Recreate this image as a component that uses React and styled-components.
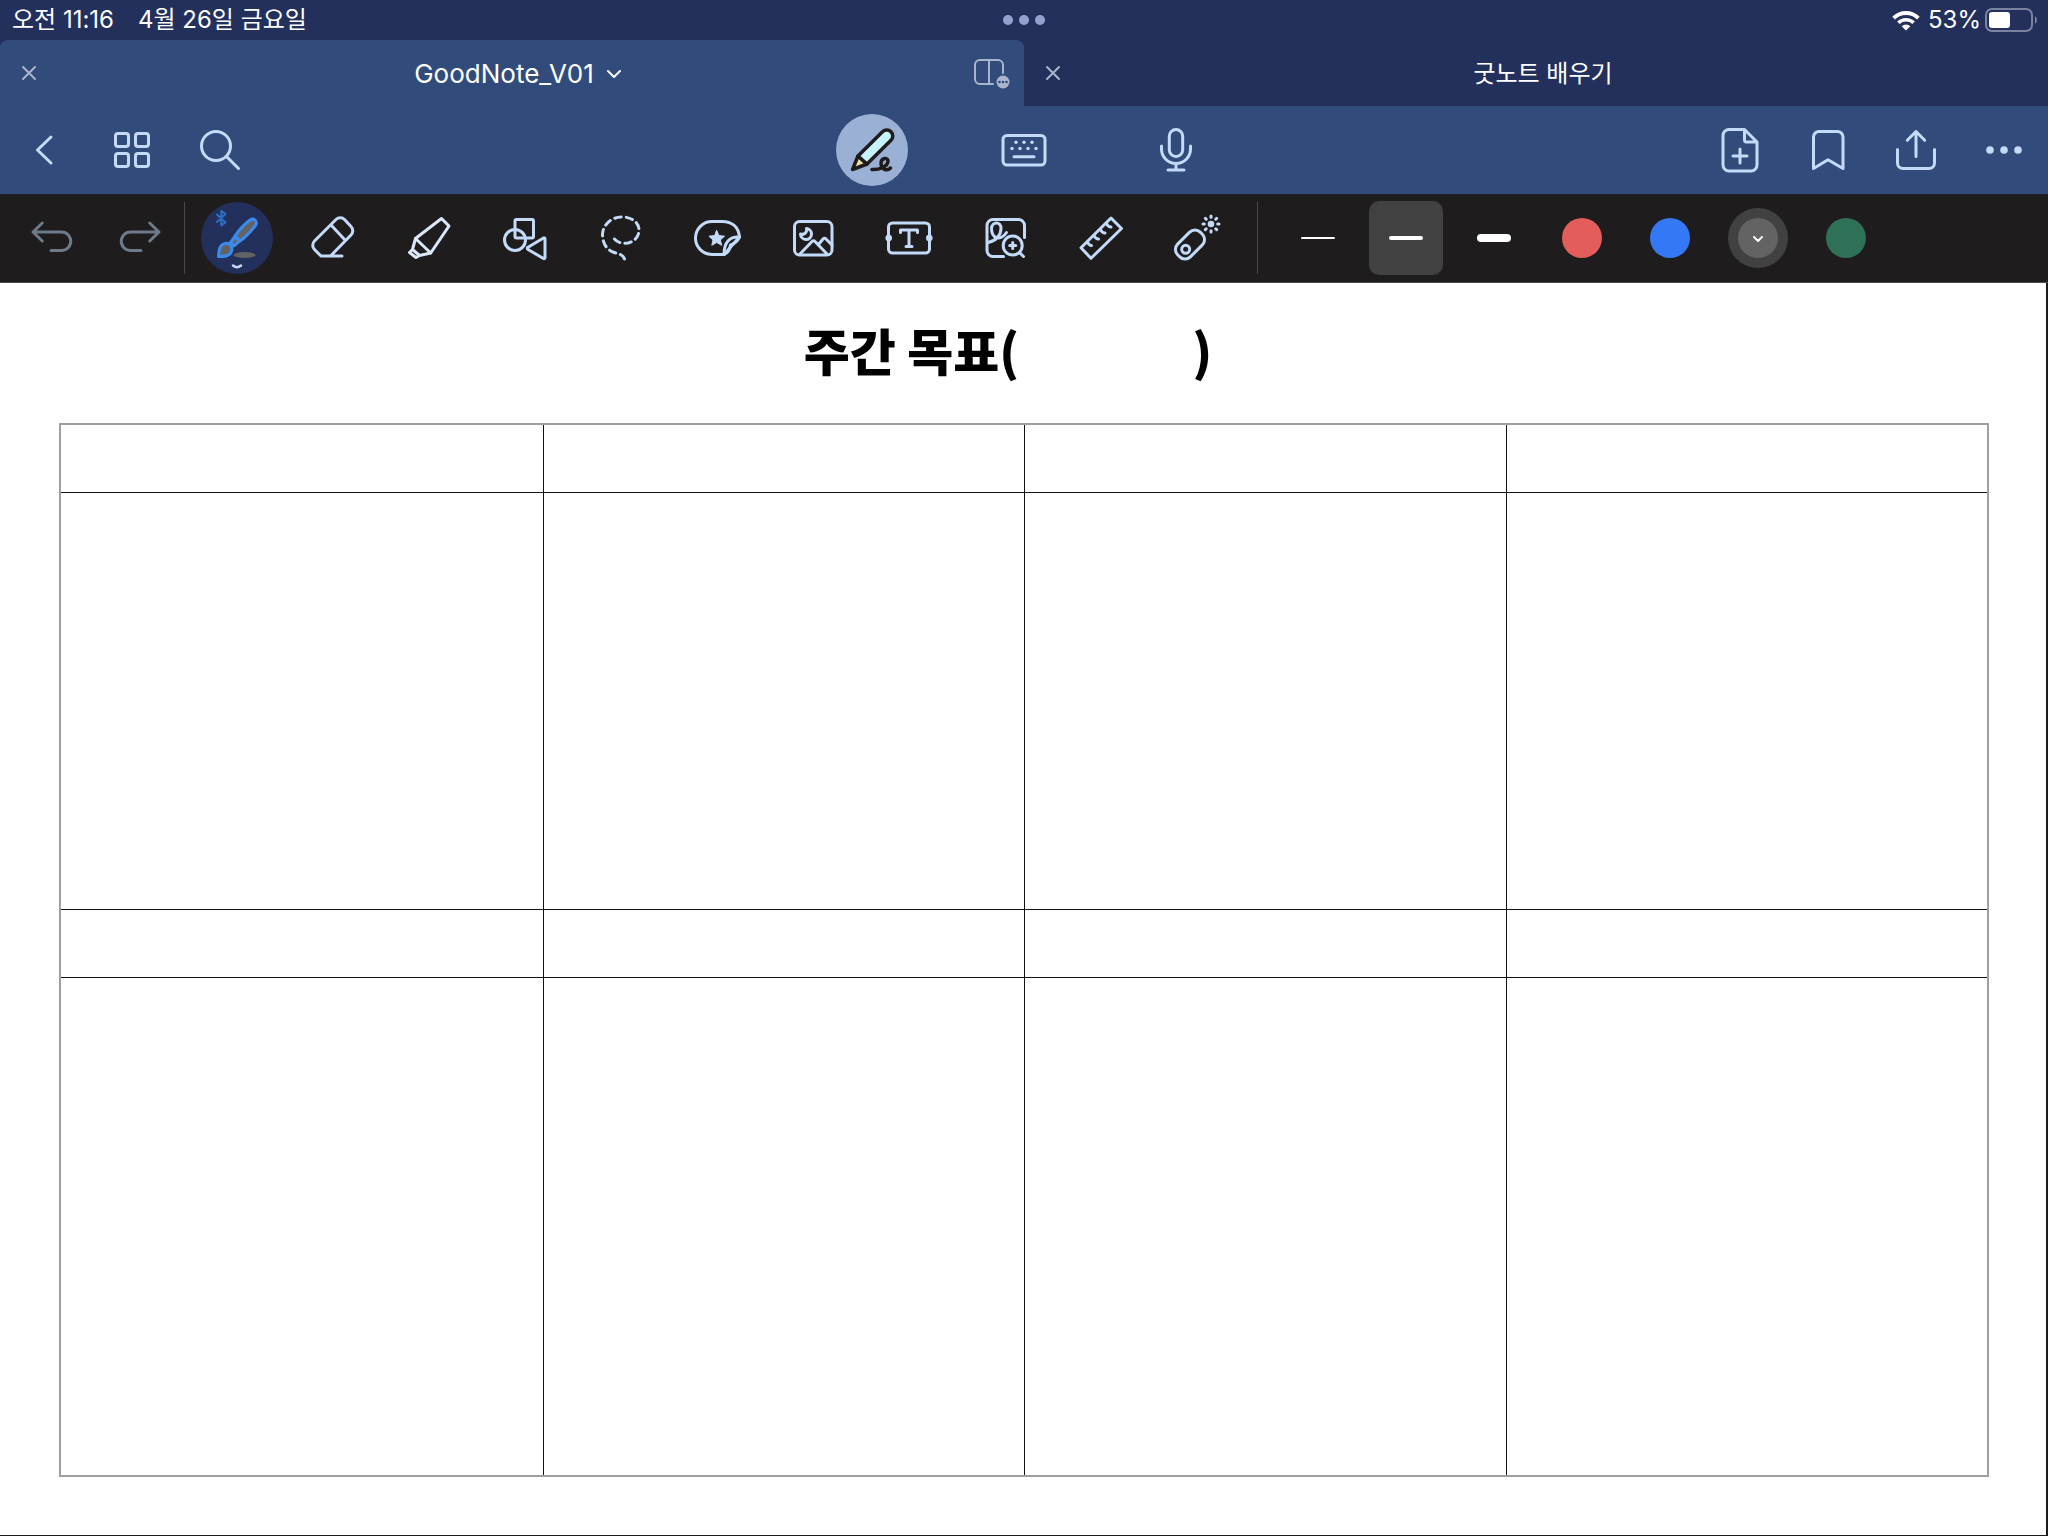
import React, { useState } from 'react';
import styled, { createGlobalStyle } from 'styled-components';

const GlobalStyle = createGlobalStyle`
  * {
    box-sizing: border-box;
  }

  body {
    margin: 0;
    background: #1e1c1d;
    font-family: Inter, 'Noto Sans CJK KR', sans-serif;
  }

  button {
    padding: 0;
    border: 0;
    background: none;
    color: inherit;
    font: inherit;
    cursor: pointer;
  }
`;

const Screen = styled.div`
  display: flex;
  flex-direction: column;
  min-height: 100vh;
`;

const StatusBar = styled.header`
  display: grid;
  grid-template-columns: 1fr auto 1fr;
  align-items: center;
  height: 40px;
  padding: 0 10px;
  background: #24305c;
  color: #fff;
  font-size: 24px;
  line-height: 40px;
`;

const StatusTime = styled.div`
  display: flex;
  gap: 24px;
  padding-left: 2px;
`;

const StatusRight = styled.div`
  display: flex;
  align-items: center;
  justify-content: flex-end;
  gap: 4px;
`;

const BatteryLevel = styled.span`
  padding-left: 4px;
`;

const MultitaskButton = styled.button`
  display: flex;
  gap: 6px;
`;

const MultitaskDot = styled.span`
  width: 10px;
  height: 10px;
  border-radius: 50%;
  background: #96a1d0;
`;

const Tabs = styled.nav`
  display: grid;
  grid-template-columns: 1fr 1fr;
  height: 66px;
  background: #24305c;
`;

const Tab = styled.div`
  display: flex;
  align-items: center;
  padding-right: ${({ $active }) => ($active ? '6px' : '44px')};
  border-radius: 8px 8px 0 0;
  background: ${({ $active }) => ($active ? '#314c7b' : 'transparent')};
  color: #fff;
`;

const TabButton = styled.button`
  display: flex;
  flex: none;
  align-items: center;
  justify-content: center;
  width: ${({ $width }) => $width}px;
  height: 100%;
  color: #aab4cc;
`;

const TabTitle = styled.button`
  display: flex;
  flex: 1;
  align-items: center;
  justify-content: center;
  gap: 12px;
  height: 100%;
  font-size: ${({ $size }) => $size}px;
  line-height: 32px;

  && {
    padding: 2px 0 0 ${({ $indent }) => $indent || 0}px;
  }
`;

const NavBar = styled.div`
  display: grid;
  grid-template-columns: 1fr auto 1fr;
  align-items: center;
  height: 88px;
  background: #314c7b;
  color: #c3daf8;
`;

const NavGroup = styled.div`
  display: flex;
  justify-content: ${({ $align }) => $align || 'flex-start'};
  gap: ${({ $gap }) => $gap || 0}px;
`;

const IconButton = styled.button`
  display: flex;
  align-items: center;
  justify-content: center;
  width: ${({ $width }) => $width || 88}px;
  height: 72px;
  color: ${({ $muted }) => ($muted ? '#6f7a88' : 'inherit')};
`;

const RoundButton = styled(IconButton)`
  width: 72px;
  border-radius: 50%;
  background: ${({ $fill }) => $fill || 'transparent'};
`;

const ToolBar = styled.div`
  display: flex;
  align-items: center;
  height: 89px;
  padding: 0 8px;
  border-bottom: 1px solid #4a4849;
  background: #1e1c1d;
  color: #c3daf8;
`;

const Divider = styled.span`
  width: 1px;
  height: 72px;
  background: #4a4849;
`;

const Tools = styled.div`
  display: flex;
  gap: 24px;
  padding: 0 24px 0 16px;
`;

const Presets = styled.div`
  display: flex;
  gap: 14px;
  padding-left: 23px;
`;

const PresetButton = styled.button`
  display: flex;
  align-items: center;
  justify-content: center;
  width: 74px;
  height: 74px;
  border-radius: 10px;
  background: ${({ $selected }) => ($selected ? '#414142' : 'transparent')};
`;

const StrokeLine = styled.span`
  width: 34px;
  height: ${({ $size }) => $size}px;
  border-radius: 4px;
  background: #fff;
`;

const ColorRing = styled.span`
  display: flex;
  align-items: center;
  justify-content: center;
  width: 60px;
  height: 60px;
  border-radius: 50%;
  background: ${({ $selected }) => ($selected ? '#414142' : 'transparent')};
`;

const ColorDot = styled.span`
  display: flex;
  align-items: center;
  justify-content: center;
  width: 40px;
  height: 40px;
  border-radius: 50%;
  background: ${({ $color }) => $color};
  color: #fff;
`;

const Paper = styled.main`
  display: flex;
  flex: 1;
  flex-direction: column;
  padding: 30px 57px 58px 59px;
  border-right: 2px solid #1e1c1d;
  border-bottom: 1px solid #1e1c1d;
  background: #fff;
`;

const Title = styled.h1`
  display: flex;
  justify-content: center;
  gap: 173px;
  margin: 0 0 38px;
  padding-right: 32px;
  color: #000;
  font-family: 'Noto Sans CJK KR', sans-serif;
  font-size: 50px;
  font-weight: 900;
  line-height: 72px;
`;

const Planner = styled.table`
  flex: 1;
  width: 100%;
  border: 2px solid #9f9f9f;
  border-spacing: 0;
  table-layout: fixed;
`;

const PlannerRow = styled.tr`
  height: ${({ $height }) => $height}px;

  &:last-child > td {
    border-bottom: 0;
  }
`;

const PlannerCell = styled.td`
  padding: 0;
  border-left: 1px solid #111;
  border-bottom: 1px solid #111;

  &:first-child {
    border-left: 0;
  }
`;

const Icon = ({ size = 48, width = size, height = size, stroke = 3, children }) => (
  <svg
    width={width}
    height={height}
    viewBox={`0 0 ${width} ${height}`}
    fill="none"
    stroke="currentColor"
    strokeWidth={stroke}
    strokeLinecap="round"
    strokeLinejoin="round"
    aria-hidden="true"
  >
    {children}
  </svg>
);

const CloseIcon = () => (
  <Icon size={16} stroke={2}>
    <path d="M2 2L14 14M14 2L2 14" />
  </Icon>
);

const ChevronIcon = () => (
  <Icon width={16} height={12} stroke={2}>
    <path d="M2 3L8 9L14 3" />
  </Icon>
);

const SplitIcon = () => (
  <Icon width={36} height={32} stroke={2}>
    <path d="M19 27H6a5 5 0 0 1-5-5V8a5 5 0 0 1 5-5h18a5 5 0 0 1 5 5v8M15 3v24" />
    <circle cx="29" cy="25" r="6.5" fill="currentColor" stroke="none" />
    <g fill="#314c7b" stroke="none">
      <circle cx="25.5" cy="25" r="1.3" />
      <circle cx="29" cy="25" r="1.3" />
      <circle cx="32.5" cy="25" r="1.3" />
    </g>
  </Icon>
);

const WifiIcon = () => (
  <Icon width={28} height={22} stroke={0}>
    <g fill="#fff">
      <path d="M14 21.5l-4.3-4.3a6.4 6.4 0 0 1 8.6 0z" />
      <path d="M7.7 15.1L5.1 12.5a12.8 12.8 0 0 1 17.8 0l-2.6 2.6a9.2 9.2 0 0 0-12.6 0z" />
      <path d="M3 10.4L.3 7.7a19.6 19.6 0 0 1 27.4 0L25 10.4a15.8 15.8 0 0 0-22 0z" />
    </g>
  </Icon>
);

const BatteryIcon = () => (
  <Icon width={53} height={24} stroke={2}>
    <rect x="1" y="1" width="46" height="22" rx="6" stroke="#7c83a0" />
    <rect x="4" y="4" width="21" height="16" rx="3" fill="#fff" stroke="none" />
    <path d="M50 8v8a5 5 0 0 0 0-8z" fill="#7c83a0" stroke="none" />
  </Icon>
);

const BackIcon = () => (
  <Icon>
    <path d="M31 11L17.5 24L31 37" />
  </Icon>
);

const GridIcon = () => (
  <Icon>
    <rect x="7.5" y="7.5" width="13" height="13" rx="2.5" />
    <rect x="27.5" y="7.5" width="13" height="13" rx="2.5" />
    <rect x="7.5" y="27.5" width="13" height="13" rx="2.5" />
    <rect x="27.5" y="27.5" width="13" height="13" rx="2.5" />
  </Icon>
);

const SearchIcon = () => (
  <Icon>
    <circle cx="20" cy="20" r="14.5" />
    <path d="M30.5 30.5L42.5 42.5" />
  </Icon>
);

const PencilIcon = () => (
  <Icon size={72} stroke={3.5}>
    <g stroke="#1e1c1d">
      <path d="M22 42L16.5 55.5L31 50z" fill="#ecdf9c" />
      <path d="M22 42L46.5 17.7a6 6 0 0 1 8.5 8.5L31 50z" fill="#c9f3fc" />
      <path d="M36 55.5c7 .5 16-3 16-8.500 0-4-7-3.500-7 2.500 0 6 6 8 9.500 4.500" />
    </g>
  </Icon>
);

const KeyboardIcon = () => (
  <Icon>
    <rect x="3" y="9.5" width="42" height="29.5" rx="4" />
    <path d="M14 30.7H34" />
    <g fill="currentColor" stroke="none">
      {[16, 24, 32].map((x) => (
        <circle key={x} cx={x} cy="16.3" r="1.7" />
      ))}
      {[12, 20, 28, 36].map((x) => (
        <circle key={x} cx={x} cy="22.5" r="1.7" />
      ))}
    </g>
  </Icon>
);

const MicIcon = () => (
  <Icon>
    <rect x="17.3" y="3.5" width="13.4" height="27" rx="6.7" />
    <path d="M9.5 20v3a14.5 14.5 0 0 0 29 0v-3M24 37.5V44M16 44H32" />
  </Icon>
);

const AddPageIcon = () => (
  <Icon>
    <path d="M28.5 3.5H13a6 6 0 0 0-6 6V39a6 6 0 0 0 6 6H35a6 6 0 0 0 6-6V16L28.5 3.5V14a2 2 0 0 0 2 2H41M24 23v14M17 30H31" />
  </Icon>
);

const BookmarkIcon = () => (
  <Icon>
    <path d="M9.5 42.5V11a5.5 5.5 0 0 1 5.5-5.5H33.5A5.5 5.5 0 0 1 39 11V42.5L24 33.8z" />
  </Icon>
);

const ShareIcon = () => (
  <Icon>
    <path d="M24 30.5V5.5M15.3 14.3L24 5.5L32.7 14.3M5.5 23.5V37a5.5 5.5 0 0 0 5.5 5.5H37a5.5 5.5 0 0 0 5.5-5.5V23.5" />
  </Icon>
);

const MoreIcon = () => (
  <Icon>
    <g fill="currentColor" stroke="none">
      <circle cx="10" cy="24" r="3.8" />
      <circle cx="24" cy="24" r="3.8" />
      <circle cx="38" cy="24" r="3.8" />
    </g>
  </Icon>
);

const UndoIcon = () => (
  <Icon>
    <path d="M14.3 9L5 18L14.3 27M5 18H33.5a9.25 9.25 0 0 1 0 18.5H23" />
  </Icon>
);

const RedoIcon = () => (
  <Icon>
    <path d="M33.7 9L43 18L33.7 27M43 18H14.5a9.25 9.25 0 0 0 0 18.5H25" />
  </Icon>
);

const BrushIcon = () => (
  <Icon size={72}>
    <path d="M16 12.5L24.5 20.5L20.3 23.5V9L24.5 12L16 20" stroke="#2c6fc9" strokeWidth="2" />
    <ellipse cx="43.5" cy="53" rx="11" ry="3" fill="#636363" stroke="none" />
    <g fill="#636363" stroke="#3a8bee">
      <path d="M34 34C38 28 45 21 49 18c4-2.5 8 1.5 5.5 5.5C51 28 45 35 39 39z" />
      <path d="M29.5 40.5L34 34.5L38.5 39L33 44z" />
      <path d="M17.5 54.5c.5-3 0-5.5 1.5-9 2.5-5 8.5-5.5 11-1.5 2.5 4.5-.5 9-5 10-2.5.5-5 .5-7.5.5z" />
    </g>
    <path d="M32 63.5q4 3.5 8 0" stroke="#c3daf8" strokeWidth="2.5" />
  </Icon>
);

const EraserIcon = () => (
  <Icon>
    <path d="M12 42L5.500 35.5a6 6 0 0 1 0-8.5L27 5.500a6 6 0 0 1 8.5 0L42 12.5a6 6 0 0 1 0 8.500L21.500 42M12 42H33M22.500 11.500L36 26" />
  </Icon>
);

const HighlighterIcon = () => (
  <Icon>
    <g stroke="#dbe8fa">
      <path d="M36.5 4.5L44 12L25.7 39L10.5 24.5z" />
      <path d="M10.5 24.5L7.5 35.5M25.7 39L14.5 41.5M7.5 35.5L14.5 41.5L11 43.5L4.5 38.5z" />
    </g>
  </Icon>
);

const ShapesIcon = () => (
  <Icon>
    <rect x="14" y="5.5" width="18.5" height="18.5" rx="1.5" />
    <circle cx="14" cy="26" r="10.5" />
    <path d="M27 33.2L42.5 24a1 1 0 0 1 1.5 1V43.5a1 1 0 0 1-1.5 1L27 35.5a1.3 1.3 0 0 1 0-2.3z" />
  </Icon>
);

const LassoIcon = () => (
  <Icon>
    <path
      d="M17.5 25C21 29 26 29.8 31 29C38 27.5 42 22 42 16C42 8 34 3 25 3C14 3 6 11 5.5 20C5.5 29 9 35 16 38C21 40 26 40 27.5 45"
      strokeDasharray="6.5 5"
    />
  </Icon>
);

const StickerIcon = () => (
  <Icon>
    <path d="M46.5 23C45.5 13 39 7.5 29 7.5H19A16.5 16.5 0 0 0 19 40.5H31z" />
    <path d="M46.5 23C37 22 31 28 31 40.5C36 38.5 37 35 37.5 31C41 30 44 28 46.5 23z" />
    <path
      d="M23.7 16.5L26 21.6L31.5 22.2L27.4 25.9L28.6 31.3L23.7 28.5L18.8 31.3L20 25.9L15.9 22.2L21.4 21.6z"
      fill="currentColor"
      strokeWidth="1"
    />
  </Icon>
);

const ImageIcon = () => (
  <Icon>
    <rect x="5.5" y="7.5" width="37.5" height="33.5" rx="5" />
    <path d="M11 40L23 27.5a2 2 0 0 1 3 0L38 40M29.5 30.5L34 25a2 2 0 0 1 3 0L43 31" />
    <path d="M17.5 14.5a4.5 4.5 0 0 1-6 5.5a5.5 5.5 0 1 0 6-5.5z" />
  </Icon>
);

const TextIcon = () => (
  <Icon>
    <rect x="3.5" y="9" width="41" height="30" rx="4" />
    <circle cx="3.7" cy="24" r="3.3" fill="currentColor" stroke="none" />
    <circle cx="44.3" cy="24" r="3.3" fill="currentColor" stroke="none" />
    <path d="M15.5 18.5V16H32.5V18.5M24 16V32.5M21 32.5H27" />
  </Icon>
);

const ZoomIcon = () => (
  <Icon>
    <path d="M22.5 42.5H12a6 6 0 0 1-6-6V11.5a6 6 0 0 1 6-6H37.5a6 6 0 0 1 6 6V23.5" />
    <path d="M7 28.5C15 27 20 21 20 14.5C20 7 11 7 10.5 14.5C10.5 24 19 28 25.5 18.5" />
    <circle cx="31.7" cy="31.5" r="9.5" />
    <path d="M38.5 38.5L42.5 42.5M31.7 28.5V34.5M28.7 31.5H34.7" />
  </Icon>
);

const RulerIcon = () => (
  <Icon>
    <path d="M34 4L44.5 14.5L14 44.3L4 33.8z" />
    <path d="M10.5 28q1.5 3.500 4 3.500M17 21.500q1.500 3.500 4.500 3.500M23.500 15.500q1.500 3.500 4.500 3.500M29.500 9.500q1.500 3.500 4.500 3.500" />
  </Icon>
);

const LaserIcon = () => (
  <Icon>
    <rect x="1" y="21.5" width="32" height="18" rx="7.5" transform="rotate(-45 17 30.5)" />
    <circle cx="12.7" cy="35.3" r="4" />
    <circle cx="38" cy="10" r="3.3" fill="currentColor" stroke="none" />
    {[0, 45, 90, 135, 180, 225, 270, 315].map((angle) => (
      <path key={angle} d="M38 3.3V2" transform={`rotate(${angle} 38 10)`} />
    ))}
  </Icon>
);

const TOOLS = [
  { label: 'Eraser', icon: EraserIcon },
  { label: 'Highlighter', icon: HighlighterIcon },
  { label: 'Shapes', icon: ShapesIcon },
  { label: 'Lasso', icon: LassoIcon },
  { label: 'Stickers', icon: StickerIcon },
  { label: 'Image', icon: ImageIcon },
  { label: 'Text', icon: TextIcon },
  { label: 'Zoom window', icon: ZoomIcon },
  { label: 'Ruler', icon: RulerIcon },
  { label: 'Laser pointer', icon: LaserIcon },
];

const STROKES = [2, 4, 8];
const COLORS = ['#e35d5b', '#3478f6', '#636363', '#2f7156'];
const ROWS = [68, 417, 68, 497];
const COLUMNS = [0, 1, 2, 3];

const App = () => {
  const [strokeSize, setStrokeSize] = useState(4);
  const [color, setColor] = useState('#636363');

  return (
    <Screen>
      <GlobalStyle />
      <StatusBar>
        <StatusTime>
          <span>오전 11:16</span>
          <span>4월 26일 금요일</span>
        </StatusTime>
        <MultitaskButton aria-label="Multitasking">
          <MultitaskDot />
          <MultitaskDot />
          <MultitaskDot />
        </MultitaskButton>
        <StatusRight>
          <WifiIcon />
          <BatteryLevel>53%</BatteryLevel>
          <BatteryIcon />
        </StatusRight>
      </StatusBar>

      <Tabs>
        <Tab $active>
          <TabButton $width={58} aria-label="Close tab">
            <CloseIcon />
          </TabButton>
          <TabTitle $size={26} $indent={12}>
            GoodNote_V01
            <ChevronIcon />
          </TabTitle>
          <TabButton $width={52} aria-label="Split view">
            <SplitIcon />
          </TabButton>
        </Tab>
        <Tab>
          <TabButton $width={58} aria-label="Close tab">
            <CloseIcon />
          </TabButton>
          <TabTitle $size={24}>굿노트 배우기</TabTitle>
        </Tab>
      </Tabs>

      <NavBar>
        <NavGroup>
          <IconButton aria-label="Back"><BackIcon /></IconButton>
          <IconButton aria-label="Pages"><GridIcon /></IconButton>
          <IconButton aria-label="Search"><SearchIcon /></IconButton>
        </NavGroup>
        <NavGroup $gap={80}>
          <RoundButton $fill="#9ab0d4" aria-label="Write"><PencilIcon /></RoundButton>
          <RoundButton aria-label="Keyboard"><KeyboardIcon /></RoundButton>
          <RoundButton aria-label="Record"><MicIcon /></RoundButton>
        </NavGroup>
        <NavGroup $align="flex-end">
          <IconButton aria-label="Add page"><AddPageIcon /></IconButton>
          <IconButton aria-label="Bookmark"><BookmarkIcon /></IconButton>
          <IconButton aria-label="Share"><ShareIcon /></IconButton>
          <IconButton aria-label="More"><MoreIcon /></IconButton>
        </NavGroup>
      </NavBar>

      <ToolBar>
        <IconButton $muted aria-label="Undo"><UndoIcon /></IconButton>
        <IconButton $muted aria-label="Redo"><RedoIcon /></IconButton>
        <Divider />
        <Tools>
          <RoundButton $fill="#24305c" aria-label="Brush"><BrushIcon /></RoundButton>
          {TOOLS.map(({ label, icon: ToolIcon }) => (
            <RoundButton key={label} aria-label={label}>
              <ToolIcon />
            </RoundButton>
          ))}
        </Tools>
        <Divider />
        <Presets>
          {STROKES.map((size) => (
            <PresetButton
              key={size}
              $selected={size === strokeSize}
              aria-label={`Stroke ${size}`}
              onClick={() => setStrokeSize(size)}
            >
              <StrokeLine $size={size} />
            </PresetButton>
          ))}
          {COLORS.map((value) => (
            <PresetButton key={value} aria-label={`Color ${value}`} onClick={() => setColor(value)}>
              <ColorRing $selected={value === color}>
                <ColorDot $color={value}>
                  {value === color && (
                    <Icon width={12} height={10} stroke={2}>
                      <path d="M2 4L6 8L10 4" />
                    </Icon>
                  )}
                </ColorDot>
              </ColorRing>
            </PresetButton>
          ))}
        </Presets>
      </ToolBar>

      <Paper>
        <Title>
          <span>주간 목표(</span>
          <span>)</span>
        </Title>
        <Planner>
          <tbody>
            {ROWS.map((height, row) => (
              <PlannerRow key={row} $height={height}>
                {COLUMNS.map((column) => (
                  <PlannerCell key={column} />
                ))}
              </PlannerRow>
            ))}
          </tbody>
        </Planner>
      </Paper>
    </Screen>
  );
};

export default App;
